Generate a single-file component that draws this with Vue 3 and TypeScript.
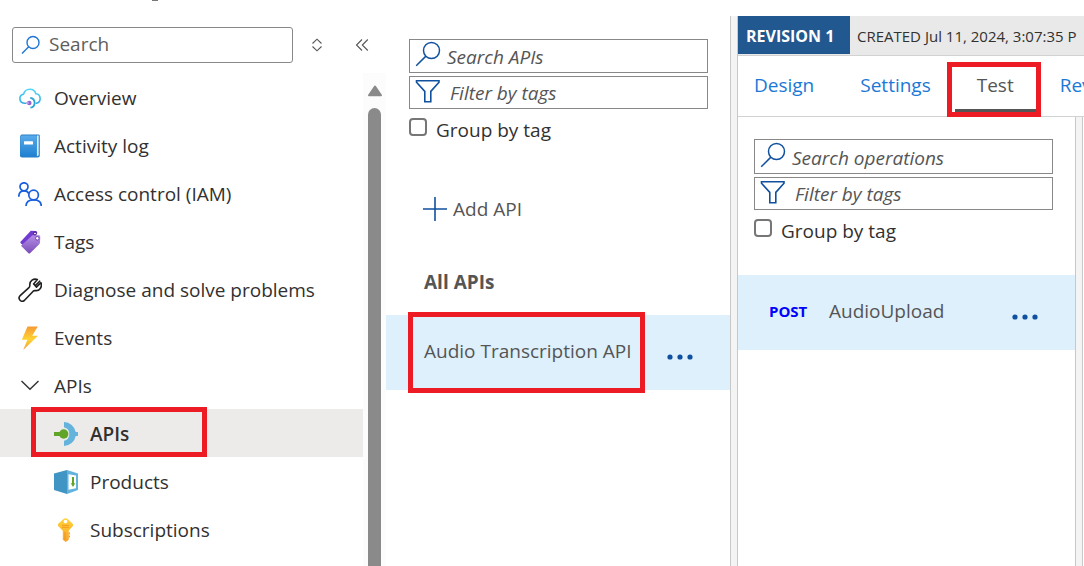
<script setup lang="ts">
import { ref } from 'vue'

interface NavItem {
  id: string
  label: string
  nested?: boolean
  active?: boolean
}

const navItems: NavItem[] = [
  { id: 'overview', label: 'Overview' },
  { id: 'log', label: 'Activity log' },
  { id: 'iam', label: 'Access control (IAM)' },
  { id: 'tags', label: 'Tags' },
  { id: 'diagnose', label: 'Diagnose and solve problems' },
  { id: 'events', label: 'Events' },
  { id: 'group', label: 'APIs' },
  { id: 'apis', label: 'APIs', nested: true, active: true },
  { id: 'products', label: 'Products', nested: true },
  { id: 'subscriptions', label: 'Subscriptions', nested: true },
]

const tabs = ['Design', 'Settings', 'Test', 'Revisions']
const activeTab = ref('Test')

const menuQuery = ref('')
const apiQuery = ref('')
const apiTags = ref('')
const groupApis = ref(false)
const operationQuery = ref('')
const operationTags = ref('')
const groupOperations = ref(false)
</script>

<template>
  <div class="page">
    <aside class="sidebar">
      <div class="title-edge"></div>
      <div class="menu-tools">
        <label class="menu-search">
          <svg width="20" height="20" viewBox="0 0 20 20" fill="none" stroke="#1f75d6" stroke-width="1.4">
            <circle cx="12" cy="7.5" r="6" />
            <path d="M7.7 11.8L1 18.5" />
          </svg>
          <input v-model="menuQuery" type="text" placeholder="Search" aria-label="Search menu" />
        </label>
        <button class="tool sort" type="button" aria-label="Expand or collapse groups">
          <svg width="12" height="14" viewBox="0 0 12 14" fill="none" stroke="#555" stroke-width="1.1">
            <path d="M1.5 5.5L6 1.2L10.5 5.5M1.5 8.5L6 12.8L10.5 8.5" />
          </svg>
        </button>
        <button class="tool collapse" type="button" aria-label="Collapse menu">
          <svg width="14" height="14" viewBox="0 0 14 14" fill="none" stroke="#555" stroke-width="1.1">
            <path d="M7 1.5L1.5 7L7 12.5M12.8 1.5L7.3 7L12.8 12.5" />
          </svg>
        </button>
      </div>
      <div class="menu-body">
        <nav class="menu">
          <a
            v-for="item in navItems"
            :key="item.id"
            href="#"
            class="menu-item"
            :class="{ nested: item.nested, active: item.active }"
          >
            <svg class="menu-icon" width="24" height="24" viewBox="0 0 24 24" fill="none" aria-hidden="true">
              <defs>
                <linearGradient id="cloud" x1="0" y1="0" x2="0" y2="1">
                  <stop offset="0" stop-color="#55d8f5" /><stop offset="1" stop-color="#2eaee0" />
                </linearGradient>
                <linearGradient id="book" x1="0" y1="0" x2="0" y2="1">
                  <stop offset="0" stop-color="#58aaea" /><stop offset="1" stop-color="#1e7fcf" />
                </linearGradient>
                <linearGradient id="tag" x1="0" y1="0" x2="0" y2="1">
                  <stop offset="0" stop-color="#b78fe6" /><stop offset="1" stop-color="#7a4db8" />
                </linearGradient>
                <linearGradient id="bolt" x1="0" y1="0" x2="0" y2="1">
                  <stop offset="0" stop-color="#f59a35" /><stop offset="0.55" stop-color="#ffd331" /><stop offset="1" stop-color="#f49a3a" />
                </linearGradient>
                <linearGradient id="key" x1="0" y1="0" x2="0" y2="1">
                  <stop offset="0" stop-color="#ffd43a" /><stop offset="1" stop-color="#f8a32c" />
                </linearGradient>
              </defs>
              <g v-if="item.id === 'overview'">
                <path d="M8.5 17.2H6.2A4.6 4.6 0 0 1 5.6 8.1A6.4 6.4 0 0 1 17.9 7.8A4.8 4.8 0 0 1 18.6 17.2H17.6" stroke="url(#cloud)" stroke-width="1.6" />
                <path d="M12.2 11.8A5 5 0 0 1 12.4 21.7" stroke="#2ba5d4" stroke-width="1.8" />
                <circle cx="11.3" cy="17" r="2.3" fill="#9466cf" />
                <path d="M8 17H11" stroke="#c3a5e8" stroke-width="1.4" />
              </g>
              <g v-else-if="item.id === 'log'">
                <path d="M3.5 .5H20.5A1.3 1.3 0 0 1 21.8 1.8V21.5A2 2 0 0 1 19.8 23.5H4A2 2 0 0 1 2 21.5V2Z" fill="#2b7fc4" />
                <path d="M19 1.6H20.7V21.2L18.5 22.6Z" fill="#d5edfb" />
                <path d="M3.5 1.6H18.8V22.8H4A1.7 1.7 0 0 1 2.3 21.1V2.6Z" fill="url(#book)" />
                <rect x="6" y="7.2" width="9" height="3.2" rx="0.5" fill="#fff" />
              </g>
              <g v-else-if="item.id === 'iam'" stroke="#185fdc" stroke-width="1.7">
                <circle cx="6" cy="4.8" r="4" />
                <circle cx="15.6" cy="13" r="4.8" />
                <path d="M.8 14.7C.8 10.7 3 8.8 6 8.8C8.4 8.8 10 9.8 10.8 11.6M8 24C8.1 20.2 11 17.8 15.7 17.8C20.4 17.8 23.2 20.2 23.3 24" />
              </g>
              <g v-else-if="item.id === 'tags'">
                <path d="M12.8.8L17.7 1C19 1.1 19.3 2 19.2 3.2L6.2 16L2.8 13.3Q1.8 12.5 2.8 11.4Z" fill="#713bd1" />
                <path d="M14.5 5.3L20.5 5Q22.2 5 22.3 6.7L22 12.3Q22 13.5 21.2 14.3L12.3 22.9Q11.2 24 10.2 22.9L3 15.8Z" fill="url(#tag)" />
                <circle cx="17" cy="3.5" r="1.5" fill="#e4d7f8" stroke="#3c1679" />
                <circle cx="19.3" cy="8.3" r="1.8" fill="#fff" stroke="#7243b0" />
              </g>
              <path
                v-else-if="item.id === 'diagnose'"
                d="M21.7 3.2L17.3 7.6L15.6 5.9L19.4 1.5C15.5.2 11.5 2.8 11.8 7.2Q11.9 8.5 11.2 9.3L1.9 17.9A3.2 3.2 0 0 0 6.3 22.5L15.2 13.2Q16 12.5 17.2 12.6C21.7 13.2 24.4 9 23 4.7L18.4 9.1L17.2 7.7Z"
                stroke="#202020" stroke-width="1.6" stroke-linejoin="round"
              />
              <path v-else-if="item.id === 'events'" d="M9.5 .5H19.8L14.2 9.7H20L5.2 24L9.4 13.8H3.8Z" fill="url(#bolt)" />
              <path v-else-if="item.id === 'group'" d="M3.5 7L12 15.3L20.5 7" stroke="#333" stroke-width="1.4" />
              <g v-else-if="item.id === 'apis'">
                <path d="M10 0A12 12 0 0 1 21.7 10H24V14H21.7A12 12 0 0 1 10 24V18.8A7 7 0 0 0 10 5.2Z" fill="#63b3dc" />
                <circle cx="9.7" cy="12" r="4.7" fill="#60a529" />
                <path d="M0 10H7V14H0Z" fill="#60a529" />
              </g>
              <g v-else-if="item.id === 'products'">
                <path d="M0 3.5L13 0V24L0 20Z" fill="#4195c4" />
                <path d="M13 0L24 3.5V20L13 24Z" fill="#63b3dc" />
                <path d="M14.5 4.3L22 5.5V18.3L14.5 19.8Z" fill="#fff" />
                <path d="M18 7H20V13.3H21.2L19 17L16.8 13.3H18Z" fill="#60a529" />
              </g>
              <g v-else>
                <path d="M9.8 .7Q11.5 -.4 13.3 .7L18.4 5.5Q19.7 7 18.5 8.5L14.8 12.6V21.8L11.8 24L8.8 21.8V12.8L4.5 8.5Q3.2 7 4.5 5.5Z" fill="url(#key)" />
                <circle cx="11.5" cy="3.6" r="1.8" fill="#fff" />
                <path d="M8 7.3H15.2M8 9.3H15.2" stroke="#f39a21" stroke-width="1" />
                <path d="M11 14V22" stroke="#ed921e" stroke-width="1" />
                <path d="M14.5 15.5H16M14.5 18.5H16" stroke="#f7a52e" stroke-width="1.8" />
              </g>
            </svg>
            <span>{{ item.label }}</span>
            <span v-if="item.active" class="marker marker-menu"></span>
          </a>
        </nav>
        <div class="scrollbar">
          <svg width="16" height="12" viewBox="0 0 16 12" aria-hidden="true">
            <path d="M8 1.5L14 10.2H2Z" fill="#8a8a8a" stroke="#8a8a8a" stroke-width="2" stroke-linejoin="round" />
          </svg>
          <div class="thumb"></div>
        </div>
      </div>
    </aside>

    <section class="api-list">
      <div class="filters">
        <label class="field">
          <svg width="26" height="26" viewBox="0 0 26 26" fill="none" stroke="#0f509f" stroke-width="1.5">
            <circle cx="16.5" cy="9.5" r="8" /><path d="M10.9 15.1L1.2 24.8" />
          </svg>
          <input v-model="apiQuery" type="text" placeholder="Search APIs" aria-label="Search APIs" />
        </label>
        <label class="field filter">
          <svg width="26" height="26" viewBox="0 0 26 26" fill="none" stroke="#0f509f" stroke-width="1.6">
            <path d="M1.5 2.8H24V4.3L15.8 13.4V23.8H9.8V13.4L1.5 4.3Z" />
          </svg>
          <input v-model="apiTags" type="text" placeholder="Filter by tags" aria-label="Filter APIs by tags" />
        </label>
        <label class="check"><input v-model="groupApis" type="checkbox" /><span>Group by tag</span></label>
      </div>
      <button class="add-api" type="button">
        <svg width="24" height="24" viewBox="0 0 24 24" fill="none" stroke="#0f509f" stroke-width="1.6">
          <path d="M0 12H24M12 0V24" />
        </svg>
        <span>Add API</span>
      </button>
      <h2 class="all-apis">All APIs</h2>
      <div class="api-row">
        <a href="#">Audio Transcription API</a>
        <button class="more" type="button" aria-label="More API actions">
          <svg width="26" height="6" viewBox="0 0 26 6" fill="#0f509f">
            <circle cx="3" cy="3" r="2.6" /><circle cx="13" cy="3" r="2.6" /><circle cx="23" cy="3" r="2.6" />
          </svg>
        </button>
        <span class="marker marker-api"></span>
      </div>
    </section>

    <div class="splitter"></div>

    <main class="detail">
      <header class="revision-bar">
        <strong>REVISION 1</strong>
        <span>CREATED Jul 11, 2024, 3:07:35 P</span>
      </header>
      <div class="tabs" role="tablist">
        <button
          v-for="tab in tabs"
          :key="tab"
          type="button"
          role="tab"
          class="tab"
          :class="{ selected: tab === activeTab }"
          :aria-selected="tab === activeTab"
          @click="activeTab = tab"
        >
          {{ tab }}
          <span v-if="tab === 'Test'" class="marker marker-tab"></span>
        </button>
      </div>
      <div class="workspace">
        <section class="operations">
          <div class="filters">
            <label class="field">
              <svg width="26" height="26" viewBox="0 0 26 26" fill="none" stroke="#0f509f" stroke-width="1.5">
                <circle cx="16.5" cy="9.5" r="8" /><path d="M10.9 15.1L1.2 24.8" />
              </svg>
              <input v-model="operationQuery" type="text" placeholder="Search operations" aria-label="Search operations" />
            </label>
            <label class="field filter">
              <svg width="26" height="26" viewBox="0 0 26 26" fill="none" stroke="#0f509f" stroke-width="1.6">
                <path d="M1.5 2.8H24V4.3L15.8 13.4V23.8H9.8V13.4L1.5 4.3Z" />
              </svg>
              <input v-model="operationTags" type="text" placeholder="Filter by tags" aria-label="Filter operations by tags" />
            </label>
            <label class="check"><input v-model="groupOperations" type="checkbox" /><span>Group by tag</span></label>
          </div>
          <div class="operation-row">
            <span class="verb">POST</span>
            <a href="#">AudioUpload</a>
            <button class="more" type="button" aria-label="More operation actions">
              <svg width="26" height="6" viewBox="0 0 26 6" fill="#0f509f">
                <circle cx="3" cy="3" r="2.6" /><circle cx="13" cy="3" r="2.6" /><circle cx="23" cy="3" r="2.6" />
              </svg>
            </button>
          </div>
        </section>
        <div class="splitter inner"></div>
        <section class="console"></section>
      </div>
    </main>
  </div>
</template>

<style>
html,
body {
  background: #fff;
}
body {
  margin: 0;
}
</style>

<style scoped>
* {
  box-sizing: border-box;
}
.page {
  display: flex;
  min-height: 100vh;
  overflow: hidden;
  font-family: "Segoe UI", "Open Sans", "Noto Sans", sans-serif;
  font-size: 19px;
  line-height: 24px;
  color: #323130;
}
a {
  color: inherit;
  text-decoration: none;
}
button {
  padding: 0;
  border: 0;
  background: none;
  font: inherit;
  color: inherit;
  cursor: pointer;
}
svg {
  display: block;
  flex: none;
}
input {
  font: inherit;
  color: inherit;
}
input[type="text"] {
  flex: 1;
  min-width: 0;
  padding: 0;
  border: 0;
  outline: 0;
  background: transparent;
}
input::placeholder {
  color: #605e5c;
  opacity: 1;
}
.marker {
  position: absolute;
  border: 5px solid #ed1c24;
  pointer-events: none;
}

.sidebar {
  flex: none;
  width: 386px;
  display: flex;
  flex-direction: column;
}
.title-edge {
  width: 6px;
  height: 1px;
  margin-left: 152px;
  background: #777;
}
.menu-tools {
  display: flex;
  align-items: center;
  height: 36px;
  margin: 26px 17px 10px 12px;
}
.menu-search {
  flex: 1;
  min-width: 0;
  display: flex;
  align-items: center;
  gap: 8px;
  height: 36px;
  padding: 0 8px;
  border: 1px solid #8a8886;
  border-radius: 3px;
}
.menu-search input {
  height: 26px;
  margin-bottom: 2px;
}
.tool {
  display: flex;
}
.sort {
  margin-left: 18px;
}
.collapse {
  margin-left: 32px;
}
.menu-body {
  flex: 1;
  display: flex;
}
.menu {
  flex: 1;
}
.menu-item {
  position: relative;
  display: flex;
  align-items: center;
  gap: 12px;
  height: 48px;
  padding: 2px 0 0 18px;
}
.menu-item.nested {
  padding-left: 54px;
}
.menu-item.active {
  background: #edebe9;
  font-weight: 600;
}
.marker-menu {
  top: -2px;
  left: 31px;
  width: 176px;
  height: 50px;
}
.scrollbar {
  width: 23px;
  display: flex;
  flex-direction: column;
  align-items: center;
  gap: 11px;
  padding-top: 12px;
  background: #fcfcfc;
}
.thumb {
  flex: 1;
  width: 13px;
  border-radius: 7px 7px 0 0;
  background: #8a8a8a;
}

.api-list {
  flex: none;
  width: 344px;
  padding-top: 39px;
}
.filters {
  display: flex;
  flex-direction: column;
  gap: 3px;
  padding: 0 22px 0 23px;
}
.field {
  display: flex;
  align-items: flex-start;
  gap: 6px;
  height: 34px;
  padding: 1px 5px 0;
  border: 1px solid #8a8886;
}
.field.filter {
  gap: 9px;
  height: 33px;
}
.field input {
  height: 30px;
  padding-top: 2px;
  font-style: italic;
}
.field.filter input {
  height: 28px;
}
.field input::placeholder {
  color: #555;
}
.check {
  display: flex;
  gap: 9px;
  padding-top: 6px;
  color: #323130;
}
.check input {
  appearance: none;
  width: 18px;
  height: 18px;
  margin: 0;
  border: 2px solid #767676;
  border-radius: 4px;
  background: #fff;
}
.check input:checked {
  background: #0f509f;
}
.add-api {
  display: flex;
  align-items: center;
  gap: 6px;
  margin: 55px 0 0 37px;
  color: #555;
}
.all-apis {
  margin: 49px 0 0 38px;
  font-size: 19px;
  line-height: 24px;
  font-weight: 700;
  color: #555;
}
.api-row,
.operation-row {
  position: relative;
  display: flex;
  align-items: center;
  height: 75px;
  background: #def0fc;
  color: #555;
}
.api-row {
  margin-top: 21px;
  padding: 0 37px 4px 38px;
}
.more {
  margin: 13px 0 0 auto;
}
.marker-api {
  top: -3px;
  left: 22px;
  width: 237px;
  height: 81px;
}

.splitter {
  flex: none;
  width: 8px;
  margin-top: 16px;
  border: solid #c8c8c8;
  border-width: 0 1px;
  background: #f4f4f4;
}
.splitter.inner {
  margin-top: 0;
}

.detail {
  flex: 1;
  min-width: 0;
  display: flex;
  flex-direction: column;
  padding-top: 16px;
}
.revision-bar {
  display: flex;
  height: 40px;
  border-bottom: 1px solid #d2d2d2;
  background: #e9e9e9;
  font-size: 15px;
  line-height: 40px;
  white-space: nowrap;
  overflow: hidden;
}
.revision-bar strong {
  flex: none;
  width: 112px;
  height: 38px;
  padding-left: 8px;
  background: #20588f;
  color: #fff;
  font-size: 16px;
}
.revision-bar span {
  padding-left: 7px;
}
.tabs {
  display: flex;
  gap: 2px;
  height: 61px;
  padding-left: 16px;
  margin-left: -22px;
  border-bottom: 1px solid #d2d2d2;
  clip-path: inset(0 0 -1px 22px);
}
.tab {
  position: relative;
  flex: none;
  height: 56px;
  padding: 5px 22px 0;
  border-bottom: 3px solid transparent;
  color: #1b78d6;
}
.tab.selected {
  border-bottom-color: #555;
  color: #555;
}
.marker-tab {
  top: 6px;
  left: -8px;
  width: 94px;
  height: 55px;
}
.workspace {
  flex: 1;
  display: flex;
}
.operations {
  flex: none;
  width: 337px;
  padding-top: 22px;
}
.operations .filters {
  padding: 0 22px 0 16px;
}
.operations .field:first-child {
  height: 35px;
  padding-top: 2px;
}
.operation-row {
  margin-top: 32px;
  padding: 0 37px 4px 31px;
}
.verb {
  width: 60px;
  font-size: 15px;
  font-weight: 700;
  color: #00f;
}
.console {
  flex: 1;
  min-width: 0;
}
</style>
